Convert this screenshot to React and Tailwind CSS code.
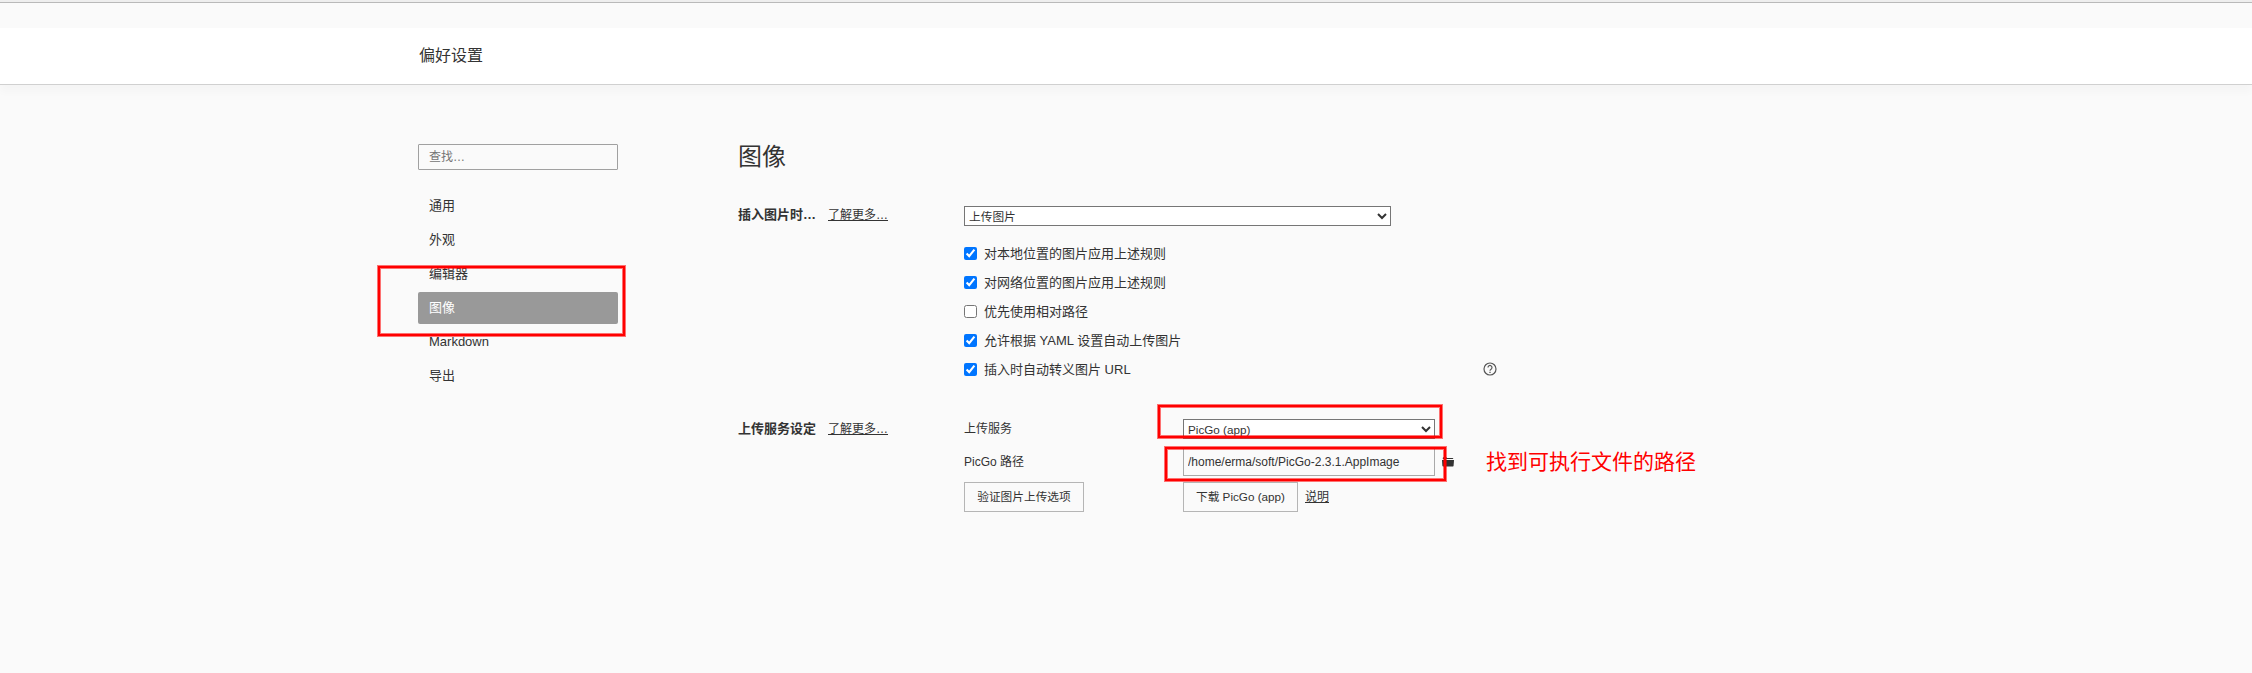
const navItems = ["通用", "外观", "编辑器", "图像", "Markdown", "导出"];

const rules = [
  { label: "对本地位置的图片应用上述规则", checked: true },
  { label: "对网络位置的图片应用上述规则", checked: true },
  { label: "优先使用相对路径", checked: false },
  { label: "允许根据 YAML 设置自动上传图片", checked: true },
  { label: "插入时自动转义图片 URL", checked: true, help: true },
];

function HelpIcon() {
  return (
    <svg width="14" height="14" viewBox="0 0 14 14" fill="none" stroke="#555" className="block">
      <circle cx="7" cy="7" r="6" strokeWidth="1.2" />
      <path d="M5 5.5a2 2 0 1 1 3.1 1.65c-.75.5-1.1.8-1.1 1.55" strokeWidth="1.2" />
      <path d="M7 9.7v1.3" strokeWidth="1.3" />
    </svg>
  );
}

function FolderIcon() {
  return (
    <svg width="12" height="10" viewBox="0 0 12 10" fill="#333" className="block">
      <path d="M.8 2V1Q.8.2 1.5.2H4.3L5.1 1H10.6Q11.2 1 11.2 1.6V2Z" />
      <path d="M0 3H12L11.6 8.8Q11.5 9.4 10.9 9.4H1.1Q.5 9.4.4 8.8Z" />
    </svg>
  );
}

function SectionLabel({ children }) {
  return (
    <div className="flex h-5 w-[226px] shrink-0 items-center">
      <span className="w-[90px] text-[13px] font-bold">{children}</span>
      <a className="text-xs leading-5 underline">了解更多…</a>
    </div>
  );
}

export default function App() {
  return (
    <div className="relative h-[673px] w-[2252px] overflow-hidden bg-[#fafafa] font-['Liberation_Sans','Noto_Sans_CJK_SC',sans-serif] text-[13px] text-[#333]">
      <div className="h-[3px] border-b border-[#b9b9b9] bg-[#eee]" />
      <header className="mt-[25px] flex h-[57px] items-center border-b border-[#d0d0d0] bg-white pl-[419px] text-base shadow-[0_7px_8px_rgba(0,0,0,0.025)]">
        <h1>偏好设置</h1>
      </header>

      <div className="flex pl-[418px] pt-[59px]">
        <aside className="w-[200px] shrink-0">
          <input
            placeholder="查找…"
            className="block h-[26px] w-full rounded-[1px] border border-[#a0a0a0] bg-transparent px-2.5 text-xs placeholder:text-[#757575]"
          />
          <nav className="mt-5 flex flex-col gap-0.5">
            {navItems.map((item) => (
              <a
                key={item}
                className={
                  item === "图像"
                    ? "flex h-8 items-center rounded-[2px] bg-[#999] px-[11px] text-white"
                    : "flex h-8 items-center px-[11px]"
                }
              >
                {item}
              </a>
            ))}
          </nav>
        </aside>

        <main className="ml-[120px] w-[760px] shrink-0">
          <h2 className="-mt-[3px] h-8 text-2xl leading-8">图像</h2>

          <section className="mt-8 flex">
            <SectionLabel>插入图片时…</SectionLabel>
            <div className="pt-px">
              <select className="block h-5 w-[427px] border border-[#767676] bg-white text-[11.7px]">
                <option>上传图片</option>
              </select>
              <div className="mt-[13px] flex flex-col">
                {rules.map((rule) => (
                  <div key={rule.label} className="flex h-[29px] w-[533px] items-center">
                    <input type="checkbox" defaultChecked={rule.checked} className="size-[13px]" />
                    <span className="ml-[7px]">{rule.label}</span>
                    {rule.help && (
                      <span className="ml-auto pb-0.5">
                        <HelpIcon />
                      </span>
                    )}
                  </div>
                ))}
              </div>
            </div>
          </section>

          <section className="mt-[35px] flex">
            <SectionLabel>上传服务设定</SectionLabel>
            <div className="grid grid-cols-[219px_auto] text-xs">
              <span className="leading-5">上传服务</span>
              <div className="h-[29px]">
                <select className="block h-5 w-[252px] border border-[#767676] bg-white text-[11.7px]">
                  <option>PicGo (app)</option>
                </select>
              </div>
              <span className="pt-1 leading-5">PicGo 路径</span>
              <div className="flex h-[34px] items-start">
                <input
                  defaultValue="/home/erma/soft/PicGo-2.3.1.AppImage"
                  className="block h-7 w-[252px] border border-[#a9a9a9] bg-transparent px-1"
                />
                <span className="ml-[7px] mt-[9px]">
                  <FolderIcon />
                </span>
              </div>
              <button className="h-[30px] w-[120px] border border-[#b5b5b5] text-[11.7px]">验证图片上传选项</button>
              <div className="flex items-center">
                <button className="h-[30px] w-[115px] border border-[#b5b5b5] text-[11.7px]">下载 PicGo (app)</button>
                <a className="ml-[7px] underline">说明</a>
              </div>
            </div>
          </section>
        </main>
      </div>

      <div className="absolute left-[378px] top-[266px] h-[70px] w-[247px] border-2 border-[#f00] shadow-[0_0_0_1px_rgba(255,0,0,0.55),inset_0_0_0_1px_rgba(255,0,0,0.55)]" />
      <div className="absolute left-[1158px] top-[405px] h-[33px] w-[284px] border-2 border-[#f00] shadow-[0_0_0_1px_rgba(255,0,0,0.55),inset_0_0_0_1px_rgba(255,0,0,0.55)]" />
      <div className="absolute left-[1165px] top-[447px] h-[34px] w-[281px] border-2 border-[#f00] shadow-[0_0_0_1px_rgba(255,0,0,0.55),inset_0_0_0_1px_rgba(255,0,0,0.55)]" />
      <p className="absolute left-[1486px] top-[447px] whitespace-nowrap text-[21px] leading-[30px] text-[#f00]">
        找到可执行文件的路径
      </p>
    </div>
  );
}
